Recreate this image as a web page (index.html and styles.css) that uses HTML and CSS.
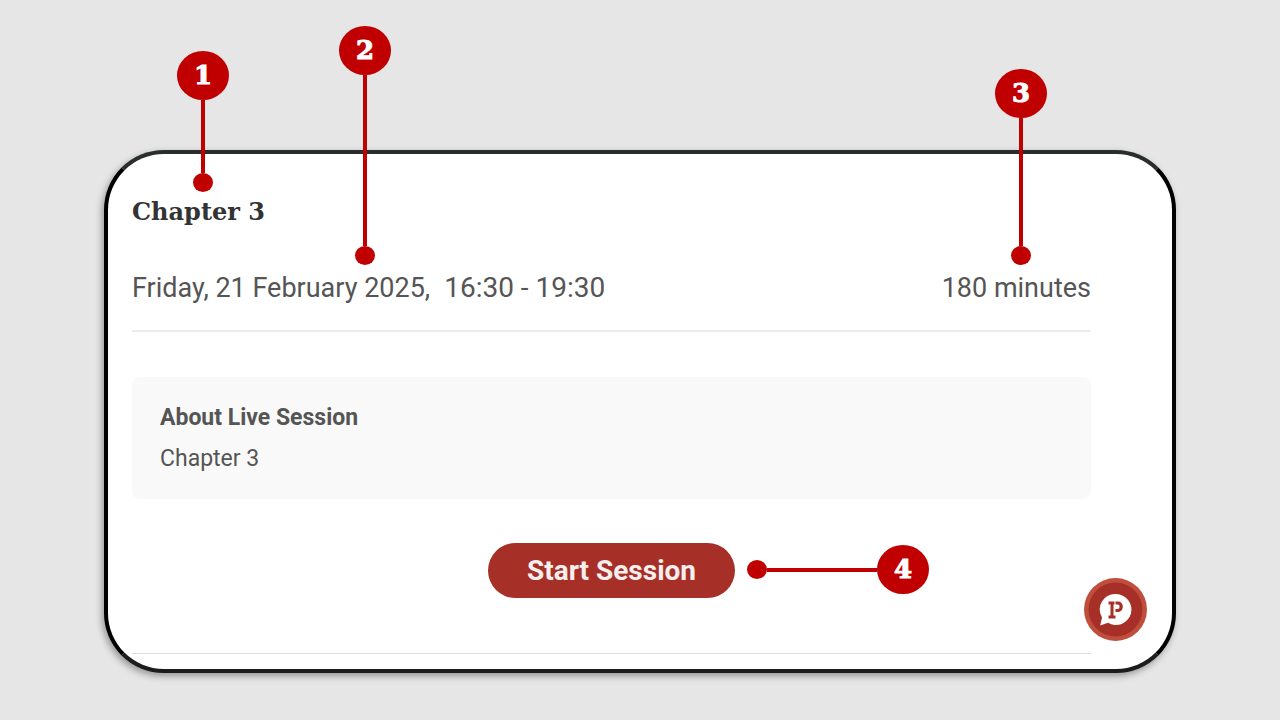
FILE: index.html
```html
<!DOCTYPE html>
<html lang="en">
<head>
    <meta charset="UTF-8">
    <meta name="viewport" content="width=device-width, initial-scale=1.0">
    <title>Live Session</title>
    <link rel="stylesheet" href="styles.css">
</head>
<body>

    <main class="card">
        <h1 class="title">Chapter 3</h1>

        <div class="schedule">
            <div class="date"><span>Friday, 21 February 2025,</span> <span class="time">16:30 - 19:30</span></div>
            <div class="duration">180 minutes</div>
        </div>

        <section class="about">
            <h2>About Live Session</h2>
            <p>Chapter 3</p>
        </section>

        <div class="actions">
            <button type="button" class="start">Start Session</button>
        </div>

        <button type="button" class="chat" aria-label="Chat">
            <svg viewBox="0 0 63 63" width="63" height="63">
                <circle cx="31.5" cy="31.5" r="31.5" fill="#bf4f3c"/>
                <circle cx="31.5" cy="31.5" r="27" fill="#a63027"/>
                <path d="M32 16a15.5 15.5 0 1 1-8 28.800L16.200 47.500 18 39.500A15.500 15.500 0 0 1 32 16Z" fill="#fff"/>
                <path d="M24.500 23.500h6v3h-1v11h2v3h-7v-3h2v-11h-2zM31.500 23.500h2.500c3 0 4.800 2 4.800 5s-1.800 5.500-4.800 5.500h-2.500v-3h2.200c1.300 0 1.800-1 1.800-2.300 0-1.400-.6-2.200-1.800-2.200h-2.200z" fill="#a63027"/>
            </svg>
        </button>

        <!-- numbered callouts -->
        <div class="callout callout-1"><span class="num">1</span><span class="line"></span><span class="dot"></span></div>
        <div class="callout callout-2"><span class="num">2</span><span class="line"></span><span class="dot"></span></div>
        <div class="callout callout-3"><span class="num">3</span><span class="line"></span><span class="dot"></span></div>
        <div class="callout callout-4"><span class="num">4</span><span class="line"></span><span class="dot"></span></div>
    </main>

</body>
</html>
```

FILE: styles.css
```css
* {
    box-sizing: border-box;
}
body {
    margin: 0;
    padding: 150px 104px 47px;
    background-color: #e6e6e6;
    color: #555;
    font-family: Roboto, sans-serif;
}
h1, h2, p {
    margin: 0;
}
.card {
    position: relative;
    padding: 38px 81px 15px 24px;
    background-color: white;
    border: 4px solid #000;
    border-top-color: #2a2d2d;
    border-bottom-color: #1c1c1c;
    border-radius: 60px;
    box-shadow: -2px 3px 7px rgba(0,0,0,0.35);
}
.title {
    font-family: "DejaVu Serif", serif;
    font-size: 24px;
    font-weight: bold;
    line-height: 40px;
    color: #333;
}
.schedule {
    display: flex;
    justify-content: space-between;
    padding: 36px 0 22px;
    border-bottom: 2px solid #ebebeb;
    font-size: 27px;
    line-height: 40px;
}
.date {
    display: flex;
    gap: 14px;
}
.time {
    font-size: 28px;
}
.about {
    margin-top: 45px;
    padding: 20px 28px;
    background-color: #f9f9f9;
    border-radius: 8px;
    font-size: 23px;
    line-height: 41px;
}
.about h2 {
    font-size: 23px;
}
.actions {
    display: flex;
    justify-content: center;
    padding: 44px 0 55px;
    border-bottom: 1px solid #ddd;
}
.start {
    padding: 0 39px;
    border: none;
    border-radius: 28px;
    background-color: #a63027;
    color: #f7eeee;
    font-family: inherit;
    font-size: 28px;
    font-weight: bold;
    line-height: 55px;
    cursor: pointer;
}
.chat {
    position: absolute;
    right: 25px;
    bottom: 28px;
    padding: 0;
    border: none;
    background: none;
    cursor: pointer;
}
.chat svg {
    display: block;
}
.callout {
    position: absolute;
    display: flex;
    flex-direction: column;
    align-items: center;
}
.num {
    width: 52px;
    height: 49px;
    border-radius: 50%;
    background-color: #c00000;
    color: white;
    font-family: "DejaVu Serif", serif;
    font-size: 26px;
    font-weight: bold;
    line-height: 49px;
    text-align: center;
    -webkit-text-stroke: 1px white;
}
.line {
    flex: 1;
    width: 4px;
    background-color: #c00000;
}
.dot {
    width: 20px;
    height: 19px;
    border-radius: 50%;
    background-color: #c00000;
}
.callout-1 {
    left: 69px;
    top: -103px;
    height: 141px;
}
.callout-2 {
    left: 231px;
    top: -128px;
    height: 239px;
}
.callout-3 {
    right: 125px;
    top: -85px;
    height: 196px;
}
.callout-4 {
    left: 639px;
    top: 391px;
    width: 182px;
    flex-direction: row-reverse;
}
.callout-4 .line {
    height: 4px;
}
```
